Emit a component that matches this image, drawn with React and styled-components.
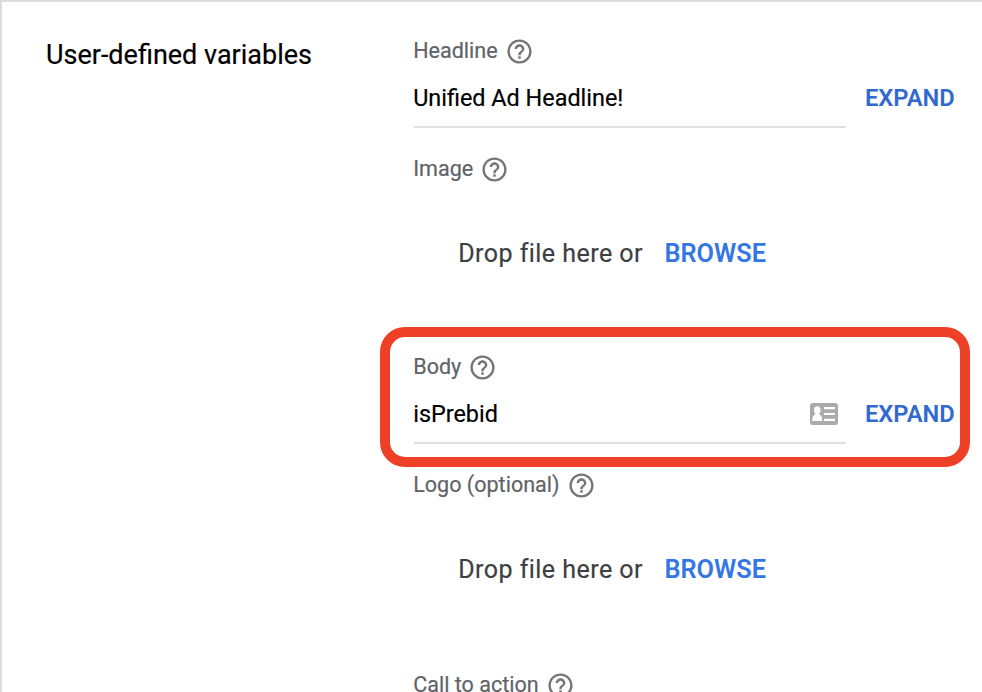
import React from "react";
import styled, { createGlobalStyle } from "styled-components";

const Global = createGlobalStyle`
  * { box-sizing: border-box; }
  body { margin: 0; overflow: hidden; background: #fff; }
`;
const Page = styled.main`
  position: relative;
  display: grid;
  grid-template-columns: 368px 1fr;
  width: 982px;
  height: 692px;
  padding-left: 44px;
  border-left: 2px solid #dadce0;
  border-top: 2px solid #dadce0;
  overflow: hidden;
  font-family: Roboto, sans-serif;
  color: #000;
  -webkit-text-stroke: 0.2px currentColor;
`;
const Title = styled.h1`
  margin: 37px 0 0;
  font-size: 27px;
  line-height: 32px;
  font-weight: 400;
  white-space: nowrap;
`;
const Fields = styled.div`
  display: flex;
  flex-direction: column;
  padding-top: 33px;
  margin-left: -0.8px;
`;
const Field = styled.section`
  flex: none;
  height: ${(p) => p.$height}px;
`;
const Label = styled.div`
  flex: none;
  display: flex;
  align-items: center;
  gap: 7px;
  height: 31px;
  font-size: 21.55px;
  color: #5f6368;
  white-space: nowrap;
  svg { margin-top: 2px; }
`;
const InputRow = styled.div`
  display: flex;
  height: 62px;
  margin-left: 0.8px;
`;
const Input = styled.div`
  display: flex;
  align-items: center;
  justify-content: space-between;
  width: 432px;
  padding: 4px 8px 0 0;
  border-bottom: 2px solid #e0e0e0;
  font-size: 23.4px;
  span { margin-left: -0.8px; }
`;
const Action = styled.button`
  padding: 0;
  border: 0;
  background: none;
  font: 600 23.7px Roboto, sans-serif;
  -webkit-text-stroke: 0;
  color: #3069d0;
`;
const Expand = styled(Action)`
  margin-left: 19px;
  padding-top: 2px;
`;
const Drop = styled.div`
  display: flex;
  align-items: center;
  gap: 21.5px;
  height: 60px;
  margin: 39px 0 0 45px;
  font-size: 25px;
  letter-spacing: 0.46px;
  color: #3c4043;
`;
const Browse = styled(Action)`
  font-size: 25.3px;
  color: #3576e5;
`;
const Highlight = styled.div`
  position: absolute;
  left: 378px;
  top: 325px;
  width: 590px;
  height: 140px;
  border: 10px solid #ee3f27;
  border-radius: 25px;
  pointer-events: none;
`;

const Help = () => (
  <svg width="29" height="29" viewBox="0 0 24 24" fill="#757575">
    <path d="M11 18h2v-2h-2v2zm1-16C6.48 2 2 6.48 2 12s4.48 10 10 10 10-4.48 10-10S17.52 2 12 2zm0 18c-4.41 0-8-3.59-8-8s3.59-8 8-8 8 3.59 8 8-3.59 8-8 8zm0-14c-2.21 0-4 1.79-4 4h2c0-1.1.9-2 2-2s2 .9 2 2c0 2-3 1.75-3 5h2c0-2.25 3-2.5 3-5 0-2.21-1.79-4-4-4z" />
  </svg>
);
const ContactCard = () => (
  <svg width="28" height="22" viewBox="0 0 28 22">
    <rect width="28" height="22" rx="3" fill="#aaa" />
    <ellipse cx="7.2" cy="7.2" rx="3.3" ry="3.9" fill="#fff" />
    <path d="M5.5 9h3.4v2.300c2 .7 3.200 2 3.200 6.700H2.300c0-4.700 1.200-6 3.200-6.700zM14 4h11v2.200H14zM14 9.900h11v2.200H14zM14 15.800h11V18H14z" fill="#fff" />
  </svg>
);
const TextField = ({ label, value, icon, height }) => (
  <Field $height={height}>
    <Label><span>{label}</span><Help /></Label>
    <InputRow>
      <Input><span>{value}</span>{icon}</Input>
      <Expand>EXPAND</Expand>
    </InputRow>
  </Field>
);
const FileField = ({ label, height }) => (
  <Field $height={height}>
    <Label><span>{label}</span><Help /></Label>
    <Drop><span>Drop file here or</span><Browse>BROWSE</Browse></Drop>
  </Field>
);

export default function App() {
  return (
    <Page>
      <Global />
      <Title>User-defined variables</Title>
      <Fields>
        <TextField label="Headline" value="Unified Ad Headline!" height={118} />
        <FileField label="Image" height={198} />
        <TextField label="Body" value="isPrebid" icon={<ContactCard />} height={118} />
        <FileField label="Logo (optional)" height={200} />
        <Label><span>Call to action</span><Help /></Label>
      </Fields>
      <Highlight />
    </Page>
  );
}
